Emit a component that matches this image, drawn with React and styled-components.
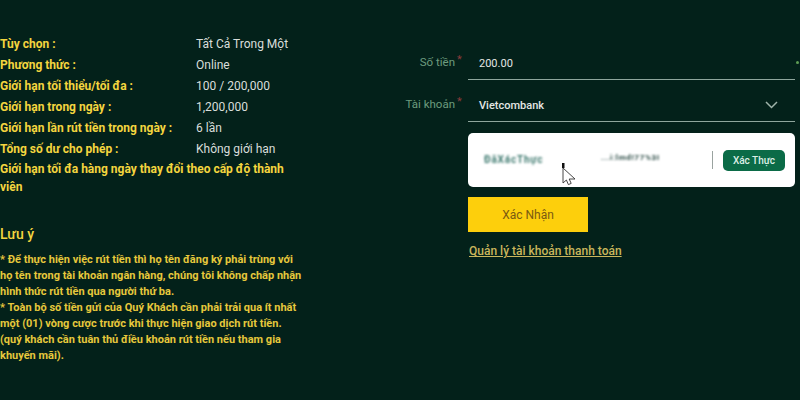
import React from "react";
import styled, { createGlobalStyle } from "styled-components";

const infoRows = [
  { label: "Tùy chọn :", value: "Tất Cả Trong Một" },
  { label: "Phương thức :", value: "Online" },
  { label: "Giới hạn tối thiểu/tối đa :", value: "100 / 200,000" },
  { label: "Giới hạn trong ngày :", value: "1,200,000" },
  { label: "Giới hạn lần rút tiền trong ngày :", value: "6 lần" },
  { label: "Tổng số dư cho phép :", value: "Không giới hạn" },
];

const GlobalStyle = createGlobalStyle`
  html, body {
    margin: 0;
    background: #03211a;
  }
  body {
    font-family: Roboto, "Liberation Sans", sans-serif;
  }
`;

const Page = styled.div`
  width: 800px;
  height: 400px;
  overflow: hidden;
  display: flex;
  box-sizing: border-box;
  padding-top: 34px;
  background: #03211a;
`;

const InfoColumn = styled.div`
  width: 300px;
  flex: none;
`;

const InfoRow = styled.div`
  display: flex;
  height: 21px;
  line-height: 21px;
  font-size: 12px;
`;

const InfoLabel = styled.span`
  width: 196px;
  flex: none;
  color: #f4d53f;
  font-weight: 700;
`;

const InfoValue = styled.span`
  color: #d9dedb;
`;

const InfoNote = styled.div`
  color: #f4d53f;
  font-size: 12px;
  font-weight: 700;
  line-height: 18px;
  width: 290px;
`;

const NoteTitle = styled.h3`
  margin: 28px 0 0;
  color: #f4d53f;
  font-size: 14px;
  font-weight: 500;
  line-height: 20px;
`;

const NoteText = styled.p`
  margin: 8px 0 0;
  color: #e6c83c;
  font-size: 11px;
  font-weight: 700;
  line-height: 16px;
  width: 310px;
  white-space: nowrap;
`;

const FormColumn = styled.div`
  margin-left: 168px;
  padding-top: 10px;
  width: 327px;
  position: relative;
`;

const Field = styled.div`
  height: 36px;
  margin-bottom: 6px;
  border-bottom: 1px solid #8fa69d;
  box-sizing: border-box;
  display: flex;
  align-items: center;
  justify-content: space-between;
  padding: 3px 17px 0 11px;
  color: #e3e7e4;
  font-size: 11px;
  font-weight: ${(p) => (p.$bold ? 500 : 400)};
  position: relative;
`;

const FieldLabel = styled.label`
  position: absolute;
  right: 100%;
  margin-right: 13px;
  top: 11px;
  white-space: nowrap;
  color: #6d9c7f;
  font-size: 11.5px;
  font-weight: 400;

  &::after {
    content: "*";
    position: absolute;
    left: 100%;
    top: -2px;
    margin-left: 2px;
    color: #8a3b3b;
    font-size: 11px;
  }
`;

const EdgeDot = styled.span`
  position: absolute;
  right: -4px;
  top: 17px;
  width: 3px;
  height: 3px;
  border-radius: 50%;
  background: #5f9e55;
`;

const CaptchaCard = styled.div`
  height: 54px;
  margin-top: 11px;
  background: #fff;
  border-radius: 5px;
  display: flex;
  align-items: center;
  position: relative;
  padding: 0 10px 0 16px;
`;

const BlurText = styled.span`
  color: ${(p) => p.$color};
  font-size: ${(p) => p.$size}px;
  font-weight: 700;
  letter-spacing: ${(p) => p.$spacing}px;
  filter: blur(0.9px);
  position: relative;
  top: ${(p) => p.$top}px;
  white-space: nowrap;
`;

const CaptchaLeft = styled.div`
  width: 117px;
  flex: none;
`;

const CaptchaMid = styled.div`
  flex: 1;
`;

const Divider = styled.span`
  width: 1px;
  height: 18px;
  background: #9aa3a0;
  margin-right: 10px;
`;

const VerifyButton = styled.button`
  width: 62px;
  height: 21px;
  padding: 0;
  border: 0;
  border-radius: 5px;
  background: #0b6b47;
  color: #dcefe6;
  font-family: inherit;
  font-size: 10px;
  font-weight: 500;
`;

const CursorIcon = styled.svg`
  position: absolute;
  left: 94px;
  top: 30px;
`;

const SubmitButton = styled.button`
  display: block;
  width: 120px;
  height: 35px;
  margin-top: 10px;
  padding: 0;
  border: 0;
  background: #fdcf0c;
  color: #7a5a12;
  font-family: inherit;
  font-size: 12px;
`;

const ManageLink = styled.a`
  display: inline-block;
  margin: 11px 0 0 1px;
  color: #c9b65c;
  font-size: 12px;
  font-weight: 500;
  line-height: 16px;
  text-decoration: underline;
`;

export default function App() {
  return (
    <>
      <GlobalStyle />
      <Page>
        <InfoColumn>
          {infoRows.map((row) => (
            <InfoRow key={row.label}>
              <InfoLabel>{row.label}</InfoLabel>
              <InfoValue>{row.value}</InfoValue>
            </InfoRow>
          ))}
          <InfoNote>Giới hạn tối đa hàng ngày thay đổi theo cấp độ thành viên</InfoNote>
          <NoteTitle>Lưu ý</NoteTitle>
          <NoteText>
            * Để thực hiện việc rút tiền thì họ tên đăng ký phải trùng với
            <br />
            họ tên trong tài khoản ngân hàng, chúng tôi không chấp nhận
            <br />
            hình thức rút tiền qua người thứ ba.
            <br />
            * Toàn bộ số tiền gửi của Quý Khách cần phải trải qua ít nhất
            <br />
            một (01) vòng cược trước khi thực hiện giao dịch rút tiền.
            <br />
            (quý khách cần tuân thủ điều khoản rút tiền nếu tham gia
            <br />
            khuyến mãi).
          </NoteText>
        </InfoColumn>

        <FormColumn>
          <Field>
            <FieldLabel>Số tiền</FieldLabel>
            200.00
            <EdgeDot />
          </Field>
          <Field $bold>
            <FieldLabel>Tài khoản</FieldLabel>
            Vietcombank
            <svg width="13" height="8" viewBox="0 0 13 8" fill="none">
              <path d="M1 1l5.5 5.5L12 1" stroke="#9fb3aa" strokeWidth="1.5" />
            </svg>
          </Field>
          <CaptchaCard>
            <CaptchaLeft>
              <BlurText $color="#3f7a70" $size={10} $spacing={0.8} $top={-3}>
                ĐãXácThực
              </BlurText>
            </CaptchaLeft>
            <CaptchaMid>
              <BlurText $color="#2a4a44" $size={8} $spacing={0.7} $top={-6}>
                ...i:lmd!77%3I
              </BlurText>
            </CaptchaMid>
            <Divider />
            <VerifyButton>Xác Thực</VerifyButton>
            <CursorIcon width="15" height="23" viewBox="0 0 15 23" fill="none">
              <rect x="0" y="0" width="2.5" height="5" fill="#111" />
              <path
                d="M1 5v15l3.4-3 2 4.6 2.8-1.2-2-4.4H13L1 5z"
                fill="#fff"
                stroke="#333"
                strokeWidth="0.9"
                strokeLinejoin="round"
              />
            </CursorIcon>
          </CaptchaCard>
          <SubmitButton>Xác Nhận</SubmitButton>
          <ManageLink>Quản lý tài khoản thanh toán</ManageLink>
        </FormColumn>
      </Page>
    </>
  );
}
